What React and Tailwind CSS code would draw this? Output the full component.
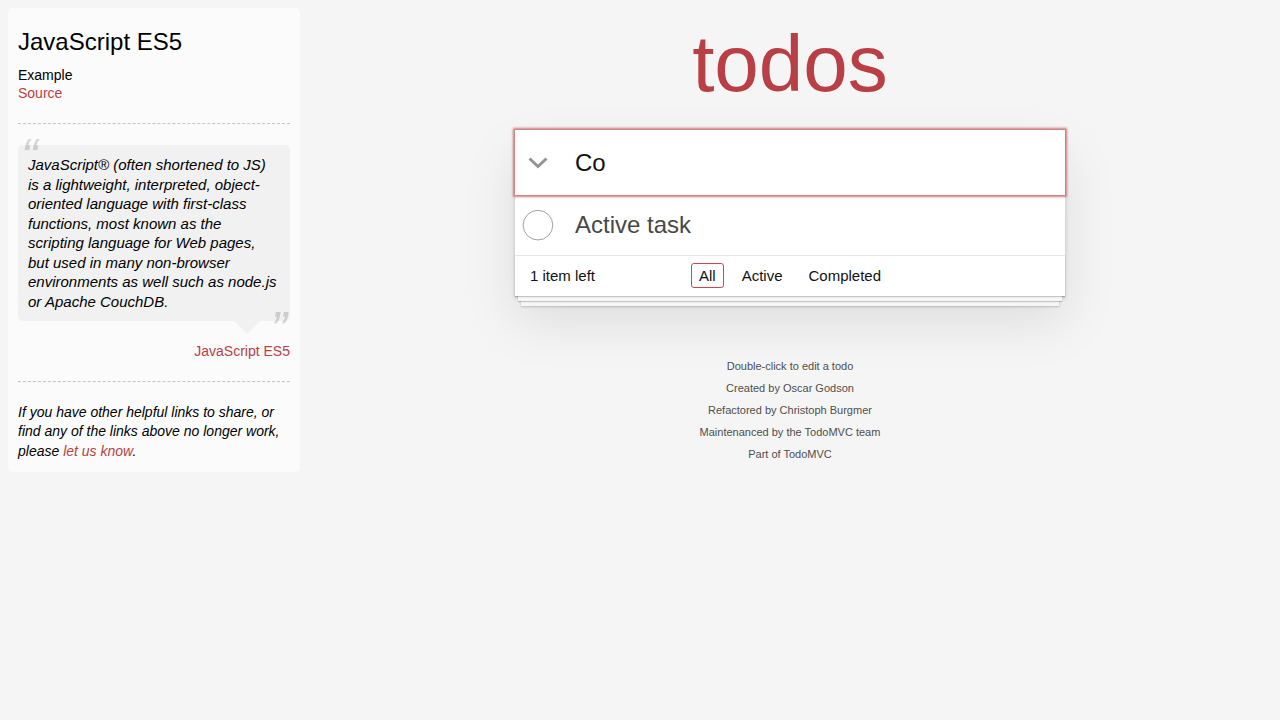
export default function App() {
  return (
    <div className="flex min-h-screen bg-[#f5f5f5] text-[#111] text-[14px] leading-[19.6px] font-['Liberation_Sans',Arial,sans-serif]">
      {/* Sidebar */}
      <div className="w-[300px] shrink-0 pl-[8px] pt-[8px]">
        <aside className="w-[292px] p-[10px] rounded-[5px] bg-white/60">
          <header>
            <h3 className="mt-[10px] mb-[10px] text-[24px] leading-[28.8px] font-normal text-black">JavaScript ES5</h3>
            <h5 className="text-[14px] leading-[16.8px] font-normal text-black">Example</h5>
            <a className="block text-[#b83f45]">Source</a>
          </header>
          <div className="mt-[20px] mb-[20px] border-t border-b border-dashed border-t-[#c5c5c5] border-b-[#f7f7f7]" />
          <blockquote>
            <div className="relative p-[10px] bg-black/[0.04] rounded-[5px]">
              <span className="absolute top-[-20px] left-[3px] text-[50px] leading-[65px] italic opacity-15 text-black">“</span>
              <p className="text-[15px] leading-[19.5px] italic text-black">
                JavaScript® (often shortened to JS) is a lightweight, interpreted, object-oriented language with first-class functions, most known as the scripting language for Web pages, but used in many non-browser environments as well such as node.js or Apache CouchDB.
              </p>
              <span className="absolute bottom-[-42px] right-[3px] text-[50px] leading-[65px] italic opacity-15 text-black">”</span>
              <span className="absolute top-full right-[30px] w-0 h-0 border-[13px] border-transparent border-t-black/[0.04]" />
            </div>
            <div className="pt-[21px] mb-[-1px] text-right leading-[19.6px]">
              <a className="text-[#b83f45]">JavaScript ES5</a>
            </div>
          </blockquote>
          <div className="mt-[20px] mb-[20px] border-t border-b border-dashed border-t-[#c5c5c5] border-b-[#f7f7f7]" />
          <footer>
            <p className="text-[14px] leading-[19.6px] italic text-black">
              If you have other helpful links to share, or find any of the links above no longer work, please <a className="text-[#b83f45]">let us know</a>.
            </p>
          </footer>
        </aside>
      </div>

      {/* Main */}
      <main className="flex-1 flex flex-col items-center">
        <header className="h-[130px] w-[550px] pt-[24px] text-center">
          <h1 className="text-[80px] leading-[80px] font-extralight text-[#b83f45]">todos</h1>
        </header>
        <section className="w-[550px] bg-white shadow-[0_2px_4px_0_rgba(0,0,0,0.2),0_25px_50px_0_rgba(0,0,0,0.1)]">
          <div className="relative z-10 h-[65px] flex items-center bg-white shadow-[0_0_2px_2px_#cf7d7d]">
            <div className="w-[45px] flex justify-center items-center">
              <svg width="20" height="12" viewBox="0 0 20 12" fill="none">
                <polyline points="1.5,1.5 10,9.5 18.5,1.5" stroke="#949494" strokeWidth="3" strokeLinecap="butt" strokeLinejoin="miter" />
              </svg>
            </div>
            <div className="pl-[15px] text-[24px] leading-[33.6px] text-[#111]">Co</div>
          </div>
          <div className="relative border-t border-[#e6e6e6]">
            <div className="flex items-center">
              <div className="w-[60px] flex items-center">
                <svg width="40" height="40" viewBox="-10 -18 100 135">
                  <circle cx="50" cy="50" r="50" fill="none" stroke="#949494" strokeWidth="3" />
                </svg>
              </div>
              <div className="py-[15px] pr-[15px] text-[24px] leading-[28.8px] text-[#484848]">Active task</div>
            </div>
          </div>
          <footer className="relative h-[41px] border-t border-[#e6e6e6] px-[15px] grid grid-cols-[1fr_auto_1fr] items-center text-[15px] leading-[20px] text-[#111] shadow-[0_1px_1px_rgba(0,0,0,0.2),0_8px_0_-3px_#f6f6f6,0_9px_1px_-3px_rgba(0,0,0,0.2),0_16px_0_-6px_#f6f6f6,0_17px_2px_-6px_rgba(0,0,0,0.2)]">
            <span className="text-left">
              <strong className="font-normal">1</strong> item left
            </span>
            <ul className="flex gap-[10px]">
              <li>
                <a className="inline-block px-[7px] py-[3px] leading-[17px] border border-[#ce4646] rounded-[3px]">All</a>
              </li>
              <li>
                <a className="inline-block px-[7px] py-[3px] leading-[17px] border border-transparent rounded-[3px]">Active</a>
              </li>
              <li>
                <a className="inline-block px-[7px] py-[3px] leading-[17px] border border-transparent rounded-[3px]">Completed</a>
              </li>
            </ul>
            <span />
          </footer>
        </section>
        <div className="mt-[65px] flex flex-col gap-[11px] text-[11px] leading-[11px] text-[#4d4d4d] text-center [text-shadow:0_1px_0_rgba(255,255,255,0.5)]">
          <p>Double-click to edit a todo</p>
          <p>Created by <a>Oscar Godson</a></p>
          <p>Refactored by <a>Christoph Burgmer</a></p>
          <p>Maintenanced by the <a>TodoMVC team</a></p>
          <p>Part of <a>TodoMVC</a></p>
        </div>
      </main>
    </div>
  );
}
